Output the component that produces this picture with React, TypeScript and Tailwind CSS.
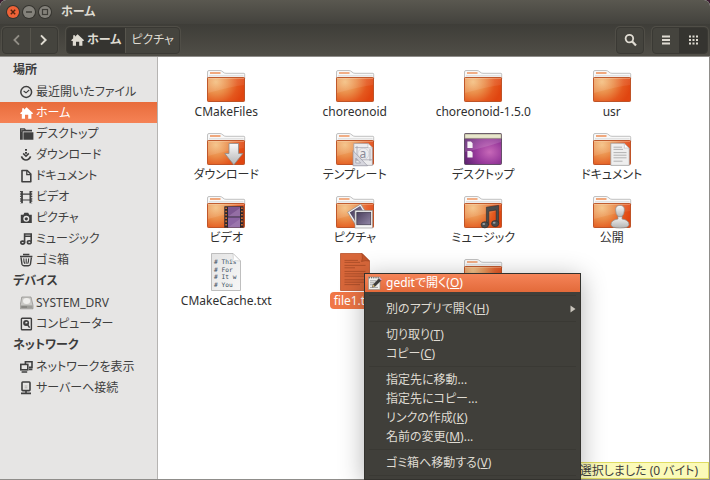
import type { ReactNode } from "react";
import clsx from "clsx";

/* ---------- symbolic icons ---------- */

const Symbolic = ({ children }: { children: ReactNode }) => (
  <svg viewBox="0 0 14 14" className="h-3.5 w-3.5 shrink-0" fill="none" stroke="currentColor" strokeWidth="1.6">
    {children}
  </svg>
);

const HomeIcon = () => (
  <Symbolic>
    <path d="M6.6 1.2 L12.8 7 V8 H11.4 V12.8 H8.2 V8.8 H5 V12.8 H1.8 V8 H0.4 V7 Z" fill="currentColor" stroke="none" />
    <path d="M2.2 2.2 H4 V4.4 L2.2 5.8 Z" fill="currentColor" stroke="none" />
  </Symbolic>
);

const ClockIcon = () => (
  <Symbolic>
    <circle cx="6.2" cy="7" r="5.4" strokeWidth="1.5" />
    <path d="M3.6 6 L6 7.8 L9.2 5" strokeWidth="1.1" />
  </Symbolic>
);

const FolderSmallIcon = () => (
  <Symbolic>
    <path d="M0 12.8 V1.2 H4.8 L6 2.8 H12 V4.4 H2.8 V12.8 Z" fill="currentColor" stroke="none" />
    <path d="M3.4 5.2 H13.4 V12.8 H3.4 Z" fill="currentColor" stroke="none" />
    <path d="M1 2.6 H4.2 M1 4 H2.2" stroke="#9a9894" strokeWidth="0.7" />
  </Symbolic>
);

const DownloadIcon = () => (
  <Symbolic>
    <path d="M6 1 V2.8 M6 4 V5.8" strokeWidth="2" />
    <path d="M3.2 5.4 L6 8.2 L8.8 5.4" strokeWidth="1.6" />
    <path d="M1.4 8.4 Q2.8 12 6 12 Q9.2 12 10.6 8.4" strokeWidth="1.6" />
  </Symbolic>
);

const DocumentIcon = () => (
  <Symbolic>
    <path d="M2 1.5 H7.2 L10.8 5 V12.8 H2 Z" strokeLinejoin="round" />
    <path d="M6.8 1.5 V5.6 H11" strokeWidth="1.3" />
  </Symbolic>
);

const VideoIcon = () => (
  <Symbolic>
    <path d="M2 1 V13.2 M10.4 1 V13.2" strokeWidth="1.8" />
    <path d="M0.6 4.2 H11.8 M0.6 10 H11.8" strokeWidth="1.2" />
    <path d="M0.7 1 V13.2 M11.7 1 V13.2" strokeWidth="1.2" strokeDasharray="1.2 1.2" />
  </Symbolic>
);

const CameraIcon = () => (
  <Symbolic>
    <path
      d="M0.8 3.8 H3.4 L4.4 1.8 H8.2 L9.2 3.8 H11.8 V12 H0.8 Z M6.3 4.8 A3 3 0 1 0 6.3 10.8 A3 3 0 1 0 6.3 4.8 Z"
      fill="currentColor"
      fillRule="evenodd"
      stroke="none"
    />
    <circle cx="6.3" cy="7.8" r="1.6" fill="currentColor" stroke="none" />
  </Symbolic>
);

const MusicIcon = () => (
  <Symbolic>
    <path d="M4.6 10.4 V2 H11.2 V9.6 M4.6 4.2 H11.2" />
    <ellipse cx="2.7" cy="10.6" rx="1.9" ry="1.5" />
    <ellipse cx="9.3" cy="10.2" rx="1.9" ry="1.5" />
  </Symbolic>
);

const TrashIcon = () => (
  <Symbolic>
    <path d="M0 3.6 H12.4 M3 1.5 H9.4" strokeWidth="1.5" />
    <path d="M1 4.4 L2 11.4 Q2.4 12.7 4 12.7 H8.4 Q10 12.7 10.4 11.4 L11.4 4.4" strokeWidth="1.4" />
    <path d="M3.8 5.4 Q3.6 9 4.8 10.8 M6.2 5.4 V10.8 M8.6 5.4 Q8.8 9 7.6 10.8" strokeWidth="1.1" />
  </Symbolic>
);

const DriveIcon = () => (
  <Symbolic>
    <path d="M1.8 1 H11 L13 9.4 V12.8 H0.2 V9.4 Z" fill="#c9c8c5" stroke="#8b8a86" strokeWidth="0.7" />
    <ellipse cx="6.6" cy="5" rx="3.6" ry="2.9" fill="#efeeec" stroke="none" />
    <path d="M0.6 9.4 H12.6 V12.4 H0.6 Z" fill="#9d9c98" stroke="none" />
    <path d="M1.4 11 H7" stroke="#6a6965" strokeWidth="0.8" />
  </Symbolic>
);

const HardDiskIcon = () => (
  <Symbolic>
    <rect x="1.4" y="1.2" width="10" height="11.6" rx="0.8" strokeWidth="1.4" />
    <circle cx="6.1" cy="6" r="3" fill="currentColor" stroke="none" />
    <circle cx="6.4" cy="5.8" r="1.1" fill="#e6e5e4" stroke="none" />
    <path d="M6.6 6.4 L9.6 10.6" strokeWidth="1.5" />
  </Symbolic>
);

const NetworkIcon = () => (
  <Symbolic>
    <path d="M5.4 4.4 V1.8 H12 V7.4 H9" />
    <rect x="0.8" y="4.4" width="7" height="5.4" />
    <path d="M1.6 12 H7.2 M9 9.4 H12.4" strokeWidth="1.7" />
  </Symbolic>
);

const ServerIcon = () => (
  <Symbolic>
    <rect x="2" y="1" width="8" height="8.6" rx="0.8" />
    <path d="M6 9.6 V12.2 M1 12.4 H11" strokeWidth="1.6" />
    <path d="M4.6 6.8 H7.4 M4.6 5 H7.4" stroke="#b3b1ad" strokeWidth="1" />
  </Symbolic>
);

/* ---------- large icons ---------- */

const Gradients = () => (
  <svg className="absolute h-0 w-0" aria-hidden="true">
    <defs>
      <radialGradient id="folder" gradientUnits="userSpaceOnUse" cx="9" cy="12" r="29">
        <stop offset="0" stopColor="#f3bd7c" />
        <stop offset="0.4" stopColor="#ea8c48" />
        <stop offset="0.75" stopColor="#e4571d" />
        <stop offset="1" stopColor="#e04510" />
      </radialGradient>
      <linearGradient id="gloss" x1="0" y1="0" x2="1" y2="1">
        <stop offset="0" stopColor="#fff" stopOpacity="0.16" />
        <stop offset="1" stopColor="#fff" stopOpacity="0.04" />
      </linearGradient>
      <linearGradient id="metal" x1="0" y1="0" x2="0" y2="1">
        <stop offset="0" stopColor="#fafafa" />
        <stop offset="1" stopColor="#b4b4b4" />
      </linearGradient>
      <linearGradient id="paper" x1="0" y1="0" x2="1" y2="1">
        <stop offset="0" stopColor="#e4e4e4" />
        <stop offset="1" stopColor="#f7f7f7" />
      </linearGradient>
      <radialGradient id="purple" cx="0.68" cy="0.6" r="0.75">
        <stop offset="0" stopColor="#c768b8" />
        <stop offset="0.5" stopColor="#993a9c" />
        <stop offset="1" stopColor="#5c2370" />
      </radialGradient>
      <linearGradient id="photo" x1="0" y1="0" x2="1" y2="1">
        <stop offset="0" stopColor="#4a3f5c" />
        <stop offset="1" stopColor="#9388a8" />
      </linearGradient>
    </defs>
  </svg>
);

const Folder = ({ children }: { children?: ReactNode }) => (
  <svg viewBox="0 0 38 32" className="h-8 w-[38px] overflow-visible">
    <path d="M0.5 9 V2 Q0.5 0.5 2 0.5 H13 Q14.5 0.5 16 2 Q17.3 3.3 19 3.3 H37 Q37.7 3.3 37.7 4.3 V9 Z" fill="#f8f8f8" stroke="#b3b3b3" strokeWidth="0.8" />
    <path d="M3 3 H13.5" stroke="#ee8e55" strokeWidth="1.4" />
    <path d="M2 5.8 H36.5" stroke="#d0d0d0" strokeWidth="0.8" />
    <rect x="0.5" y="7.5" width="37" height="24" rx="0.8" fill="url(#folder)" stroke="#b9491c" strokeWidth="0.9" />
    <path d="M1 8.4 H37" stroke="#fbd9b4" strokeOpacity="0.5" strokeWidth="0.8" />
    <path d="M1 8 H37 V15 Q24 16.5 1 23 Z" fill="url(#gloss)" />
    {children}
  </svg>
);

const DownloadEmblem = () => (
  <path d="M22 10.5 H31.5 V20.5 H35.8 L26.8 31.8 L17.8 20.5 H22 Z" fill="url(#metal)" stroke="#8d8d8d" strokeWidth="0.8" />
);

const TemplateEmblem = () => (
  <g>
    <path d="M17.8 10.4 H32 L36.4 14.8 V32.4 H17.8 Z" fill="#ececee" stroke="#9c9ca4" strokeWidth="0.7" />
    <path d="M32 10.4 V14.8 H36.4 Z" fill="#fff" stroke="#aaa" strokeWidth="0.5" />
    <path d="M21 13 V28 M34 16 V28 M19 14.6 H32 M19 26.8 H36" stroke="#8f8f9c" strokeWidth="0.6" />
    <circle cx="27.4" cy="20.8" r="5.6" fill="none" stroke="#c5c5cd" strokeWidth="0.6" />
    <text x="23.6" y="25" fontSize="12" fontFamily="Noto Sans, sans-serif" fill="#8a8a98">
      a
    </text>
    <path d="M17 17.6 L31.5 32.8 H17 Z M19.8 25 V30 H24.6 Z" fill="#d4d4dc" fillRule="evenodd" fillOpacity="0.9" stroke="#8f8f9c" strokeWidth="0.6" />
  </g>
);

const DocumentEmblem = () => (
  <g>
    <path d="M17.8 10.2 H31 L36.3 15.4 V32.4 H17.8 Z" fill="#eeeeee" stroke="#999" strokeWidth="0.7" />
    <path d="M31 10.2 Q32 14 31.2 15.2 Q34 14.6 36.3 15.4 Z" fill="#fff" stroke="#aaa" strokeWidth="0.5" />
    <path d="M20.5 14.2 H29 M20.5 16.4 H30 M20.5 19.6 H33.5 M20.5 22.2 H33.5 M20.5 24.8 H33.5 M20.5 28.2 H29.5" stroke="#a3a3a3" strokeWidth="0.8" />
  </g>
);

const VideoEmblem = () => (
  <g>
    <rect x="17.3" y="10.2" width="19.2" height="21.6" rx="0.6" fill="#2b2730" />
    <rect x="21" y="10.8" width="12" height="9.6" fill="#7d5690" />
    <rect x="21" y="21.4" width="12" height="10" fill="#8c64a2" />
    <path d="M21 20.4 L33 12 V20.4 Z M21 31.4 L33 23 V31.4 Z" fill="#a783b4" fillOpacity="0.55" />
    <path d="M19.1 11.4 V31.4 M34.9 11.4 V31.4" stroke="#e0742f" strokeWidth="1.6" strokeDasharray="1.6 1.7" />
  </g>
);

const PictureEmblem = () => (
  <g>
    <g transform="rotate(-32 21 18)">
      <rect x="14" y="11.5" width="15.5" height="15.5" fill="#f2f2f2" stroke="#8a8a8a" strokeWidth="0.6" />
      <rect x="15.6" y="13" width="12.3" height="11.2" fill="url(#photo)" />
    </g>
    <rect x="19" y="14.4" width="17.6" height="17.6" fill="#f6f6f6" stroke="#8a8a8a" strokeWidth="0.6" />
    <rect x="20.8" y="16.2" width="14" height="12.6" fill="url(#photo)" stroke="#2f2a3a" strokeWidth="0.6" />
  </g>
);

const MusicEmblem = () => (
  <g fill="#4a4c4d" stroke="#2c2d2e" strokeWidth="0.6">
    <path d="M22.4 11.2 L34.6 9.4 V27 H32.2 V14 L24.8 15.2 V29 H22.4 Z" />
    <ellipse cx="20.8" cy="28.8" rx="3.7" ry="3.1" />
    <ellipse cx="31.2" cy="27.6" rx="3.7" ry="3.1" />
    <ellipse cx="19.8" cy="28" rx="1.4" ry="1" fill="#9a9c9d" stroke="none" />
    <ellipse cx="30.2" cy="26.8" rx="1.4" ry="1" fill="#9a9c9d" stroke="none" />
  </g>
);

const PublicEmblem = () => (
  <g fill="url(#metal)" stroke="#8f8f8f" strokeWidth="0.7">
    <path d="M25 20 V23 Q18 24 18 28.5 Q18 32 27 32 Q36 32 36 28.5 Q36 24 29 23 V20 Z" />
    <path d="M27 9.4 Q31.6 9.4 31.4 14 Q31.2 18 29.4 20 Q27 22 24.6 20 Q22.8 18 22.6 14 Q22.4 9.4 27 9.4 Z" />
  </g>
);

const DesktopFolder = () => (
  <svg viewBox="0 0 38 32" className="h-8 w-[38px]">
    <rect x="0.5" y="0.5" width="37" height="31" rx="1" fill="url(#purple)" stroke="#4b3a50" strokeWidth="0.8" />
    <path d="M0.8 1 H37.2 V5.4 H0.8 Z" fill="#e8e6cc" stroke="#8b8a74" strokeWidth="0.6" />
    <path d="M1 6 H37 V9 Q22 14 1 19 Z" fill="#fff" fillOpacity="0.14" />
    <path d="M3.4 8.6 H7 L8.6 10.2 V15 H3.4 Z M3.4 18 H7 L8.6 19.6 V24.4 H3.4 Z" fill="#f6f2f6" />
  </svg>
);

const codeLines = ["# This", "# For", "# It w", "# You"];

const CodeFile = () => (
  <svg viewBox="0 0 30 38" className="h-[38px] w-[30px]">
    <path d="M0.5 0.5 H22 L29.5 8 V37.5 H0.5 Z" fill="url(#paper)" stroke="#b0b0b0" strokeWidth="0.8" />
    {codeLines.map((line, i) => (
      <text key={line} x="3" y={11 + i * 7.5} fontSize="6.2" fontFamily="DejaVu Sans Mono, monospace" fill="#3f5062" xmlSpace="preserve">
        {line}
      </text>
    ))}
    <path d="M22 0.5 Q23 6 21.5 8.5 Q25.5 7 29.5 8 Z" fill="#fff" stroke="#bcbcbc" strokeWidth="0.5" />
  </svg>
);

const SelectedFile = () => (
  <svg viewBox="0 0 30 38" className="h-[38px] w-[30px]">
    <path d="M0.5 0.5 H22 L29.5 8 V37.5 H0.5 Z" fill="#d8673a" stroke="#b9532b" strokeWidth="0.8" />
    <path d="M4.5 7.4 H18 M4.5 9.4 H20 M4.5 12.4 H25.5 M4.5 14.8 H15 M4.5 18.4 H25.5 M4.5 20.8 H25.5 M4.5 23.2 H24 M4.5 26.8 H25.5 M4.5 29.2 H25.5 M4.5 31.6 H20" stroke="#a64a27" strokeWidth="0.8" />
    <path d="M22 0.5 Q23 6 21.5 8.5 Q25.5 7 29.5 8 Z" fill="#c4562b" stroke="#8f3d1d" strokeWidth="0.5" />
  </svg>
);

const GeditIcon = () => (
  <svg viewBox="0 0 16 16" className="h-4 w-4 shrink-0">
    <rect x="1.5" y="2" width="11.5" height="12.6" fill="#f0f0ec" stroke="#8c8c84" strokeWidth="0.6" />
    <path d="M2.4 2 V3.4 M4.6 2 V3.4 M6.8 2 V3.4 M9 2 V3.4 M11.2 2 V3.4" stroke="#555" strokeWidth="0.9" />
    <path d="M3 5.8 H9 M3 7.8 H7 M3 9.8 H6 M3 12.4 H11" stroke="#8f8f8f" strokeWidth="0.8" />
    <path d="M5.4 12.2 L6.2 9.4 L12 3.4 L14 5.4 L8.2 11.3 Z" fill="#3c3b39" stroke="#222" strokeWidth="0.4" />
    <path d="M12 3.4 L13 2.4 L15 4.4 L14 5.4 Z" fill="#cfa3c9" />
    <path d="M6.3 9.6 L8 11.2 L5.4 12.2 Z" fill="#d8b86c" />
  </svg>
);

/* ---------- data ---------- */

const sections = [
  {
    title: "場所",
    items: [
      { label: "最近開いたファイル", icon: <ClockIcon /> },
      { label: "ホーム", icon: <HomeIcon />, active: true },
      { label: "デスクトップ", icon: <FolderSmallIcon /> },
      { label: "ダウンロード", icon: <DownloadIcon /> },
      { label: "ドキュメント", icon: <DocumentIcon /> },
      { label: "ビデオ", icon: <VideoIcon /> },
      { label: "ピクチャ", icon: <CameraIcon /> },
      { label: "ミュージック", icon: <MusicIcon /> },
      { label: "ゴミ箱", icon: <TrashIcon /> },
    ],
  },
  {
    title: "デバイス",
    items: [
      { label: "SYSTEM_DRV", icon: <DriveIcon /> },
      { label: "コンピューター", icon: <HardDiskIcon /> },
    ],
  },
  {
    title: "ネットワーク",
    items: [
      { label: "ネットワークを表示", icon: <NetworkIcon /> },
      { label: "サーバーへ接続", icon: <ServerIcon /> },
    ],
  },
];

const files = [
  { name: "CMakeFiles", icon: <Folder /> },
  { name: "choreonoid", icon: <Folder /> },
  { name: "choreonoid-1.5.0", icon: <Folder /> },
  { name: "usr", icon: <Folder /> },
  { name: "ダウンロード", icon: <Folder><DownloadEmblem /></Folder> },
  { name: "テンプレート", icon: <Folder><TemplateEmblem /></Folder> },
  { name: "デスクトップ", icon: <DesktopFolder /> },
  { name: "ドキュメント", icon: <Folder><DocumentEmblem /></Folder> },
  { name: "ビデオ", icon: <Folder><VideoEmblem /></Folder> },
  { name: "ピクチャ", icon: <Folder><PictureEmblem /></Folder> },
  { name: "ミュージック", icon: <Folder><MusicEmblem /></Folder> },
  { name: "公開", icon: <Folder><PublicEmblem /></Folder> },
  { name: "CMakeCache.txt", icon: <CodeFile /> },
  { name: "file1.txt", icon: <SelectedFile />, selected: true },
  { name: "", icon: <Folder /> },
];

type MenuEntry = { label: string; accel?: string; tail?: string; submenu?: boolean };

const menuGroups: MenuEntry[][] = [
  [{ label: "別のアプリで開く", accel: "H", submenu: true }],
  [
    { label: "切り取り", accel: "T" },
    { label: "コピー", accel: "C" },
  ],
  [
    { label: "指定先に移動..." },
    { label: "指定先にコピー..." },
    { label: "リンクの作成", accel: "K" },
    { label: "名前の変更", accel: "M", tail: "..." },
  ],
  [{ label: "ゴミ箱へ移動する", accel: "V" }],
];

/* ---------- parts ---------- */

const TitleBar = () => (
  <div className="flex h-6 items-center gap-1 bg-linear-to-b from-[#5a5850] to-[#43423d] pl-[7px]">
    <button aria-label="閉じる" className="flex h-3 w-3 items-center justify-center rounded-full bg-[#ee6237] ring-1 ring-[#35342f]">
      <svg viewBox="0 0 12 12" className="h-3 w-3" stroke="#53240f" strokeWidth="1.4">
        <path d="M3.8 3.8 L8.2 8.2 M8.2 3.8 L3.8 8.2" />
      </svg>
    </button>
    <button aria-label="最小化" className="flex h-3 w-3 items-center justify-center rounded-full bg-[#84827b] ring-1 ring-[#35342f]">
      <svg viewBox="0 0 12 12" className="h-3 w-3" stroke="#3f3e39" strokeWidth="1.3">
        <path d="M3 6 H9" />
      </svg>
    </button>
    <button aria-label="最大化" className="flex h-3 w-3 items-center justify-center rounded-full bg-[#84827b] ring-1 ring-[#35342f]">
      <svg viewBox="0 0 12 12" className="h-3 w-3" fill="none" stroke="#3f3e39" strokeWidth="1.2">
        <rect x="3.5" y="3.5" width="5" height="5" />
      </svg>
    </button>
    <h1 className="pl-1.5 text-xs font-bold text-[#dfdbd2]">ホーム</h1>
  </div>
);

const Group = ({ children, className }: { children: ReactNode; className?: string }) => (
  <div className={clsx("flex h-[27px] overflow-hidden rounded-sm border border-[#3a3934] bg-[#45443e] shadow-[0_0_0_1px_#504e47]", className)}>
    {children}
  </div>
);

const Toolbar = () => (
  <div className="flex h-8 items-center bg-linear-to-b from-[#3e3d38] to-[#504e47] px-0.5 text-[#dfdbd2]">
    <Group>
      <button aria-label="戻る" className="flex w-[27px] items-center justify-center text-[#918e86]">
        <svg viewBox="0 0 12 12" className="h-3 w-3" fill="none" stroke="currentColor" strokeWidth="1.8">
          <path d="M8 1.4 L3.4 6 L8 10.6" />
        </svg>
      </button>
      <button aria-label="進む" className="flex w-[27px] items-center justify-center border-l border-[#57554d]">
        <svg viewBox="0 0 12 12" className="h-3 w-3" fill="none" stroke="currentColor" strokeWidth="2">
          <path d="M3 1.4 L7.6 6 L3 10.6" />
        </svg>
      </button>
    </Group>
    <Group className="ml-2">
      <button className="flex items-center gap-0.5 border-r border-[#57554d] bg-[#353430] px-1 text-xs font-bold">
        <HomeIcon />
        ホーム
      </button>
      <button className="px-[5px] text-xs">ピクチャ</button>
    </Group>
    <div className="flex-1" />
    <Group>
      <button aria-label="検索" className="flex w-[26px] items-center justify-center">
        <svg viewBox="0 0 14 14" className="h-3.5 w-3.5" fill="none" stroke="currentColor" strokeWidth="1.8">
          <circle cx="6.4" cy="5.6" r="3.8" />
          <path d="M9.2 8.4 L13 12.4" strokeWidth="2.2" />
        </svg>
      </button>
    </Group>
    <Group className="ml-2">
      <button aria-label="リスト表示" className="flex w-[26px] items-center justify-center">
        <svg viewBox="0 0 10 10" className="h-2.5 w-2.5" stroke="currentColor" strokeWidth="2">
          <path d="M1 1.5 H9 M1 5 H9 M1 8.5 H9" />
        </svg>
      </button>
      <button aria-label="アイコン表示" className="flex w-7 items-center justify-center bg-[#353430]">
        <svg viewBox="0 0 10 10" className="h-2.5 w-2.5" stroke="currentColor" strokeWidth="2" strokeDasharray="2 1.5">
          <path d="M1 1.5 H10 M1 5 H10 M1 8.5 H10" />
        </svg>
      </button>
    </Group>
  </div>
);

const Sidebar = () => (
  <nav className="w-[158px] shrink-0 border-r border-[#b6b4b2] bg-[#e6e5e4] pt-0.5 text-[#3f3f3f]">
    {sections.map((section) => (
      <section key={section.title}>
        <h2 className="pl-[13px] text-xs leading-[22px] font-bold text-[#3c3c3c]">{section.title}</h2>
        <ul>
          {section.items.map((item) => (
            <li key={item.label}>
              <a
                href="#"
                className={clsx(
                  "flex h-[21px] items-center gap-0.5 pl-5 text-xs",
                  item.active && "bg-linear-to-b from-[#e86c3b] to-[#f58255] text-white",
                )}
              >
                {item.icon}
                {item.label}
              </a>
            </li>
          ))}
        </ul>
      </section>
    ))}
  </nav>
);

const ContextMenu = () => (
  <div
    role="menu"
    className="absolute top-[273px] left-[364px] w-[217px] border border-[#33322e] bg-[#403f3a] text-xs text-[#dfdbd2] shadow-[0_4px_24px_rgba(0,0,0,0.3)]"
  >
    <button
      role="menuitem"
      className="flex h-[18px] w-full items-center gap-[3px] bg-linear-to-b from-[#f58458] to-[#e36a3a] pl-0.5 text-white"
    >
      <GeditIcon />
      <span>
        geditで開く(<u>O</u>)
      </span>
    </button>
    {menuGroups.map((group, i) => (
      <div key={i}>
        <hr className="mx-1 my-[3px] border-[#3a3934]" />
        {group.map((entry) => (
          <button key={entry.label} role="menuitem" className="flex h-[19px] w-full items-center pr-1 pl-[21px]">
            <span className="flex-1 text-left">
              {entry.label}
              {entry.accel && (
                <>
                  (<u>{entry.accel}</u>)
                </>
              )}
              {entry.tail}
            </span>
            {entry.submenu && (
              <svg viewBox="0 0 6 8" className="h-2 w-1.5" fill="#c9c5bc">
                <path d="M0.5 0.5 L5.5 4 L0.5 7.5 Z" />
              </svg>
            )}
          </button>
        ))}
      </div>
    ))}
    <hr className="mx-1 my-[3px] border-[#3a3934]" />
  </div>
);

const App = () => {
  return (
    <div className="relative h-screen overflow-hidden bg-[#3a1c30] font-['Noto_Sans','Noto_Sans_CJK_JP',sans-serif] [font-feature-settings:'palt']">
      <Gradients />
      <div className="flex h-full flex-col overflow-hidden rounded-t-md bg-white">
        <header>
          <TitleBar />
          <Toolbar />
        </header>
        <div className="flex min-h-0 flex-1 border-t border-r border-b border-[#8f8d8a]">
          <Sidebar />
          <main className="relative flex-1 bg-white pt-[7px] pr-[33px] pl-1">
            <ul className="grid grid-cols-4 gap-y-1.5">
              {files.map((file) => (
                <li key={file.name} className="flex h-[57px] flex-col items-center">
                  <div className="flex h-[38px] items-end">{file.icon}</div>
                  <span
                    className={clsx(
                      "mt-px px-1 text-xs leading-[17px] whitespace-nowrap",
                      file.selected ? "rounded-sm bg-[#f07746] text-white" : "text-[#303030]",
                    )}
                  >
                    {file.name}
                  </span>
                </li>
              ))}
            </ul>
            <p className="absolute right-0 bottom-0 border border-[#e0dc62] bg-[#fbfab8] pr-2.5 pl-2 text-xs leading-[15px] whitespace-pre text-[#3f3f3f]">
              “file1.txt”を選択しました (0 バイト)
            </p>
          </main>
        </div>
      </div>
      <ContextMenu />
    </div>
  );
};

export default App;
